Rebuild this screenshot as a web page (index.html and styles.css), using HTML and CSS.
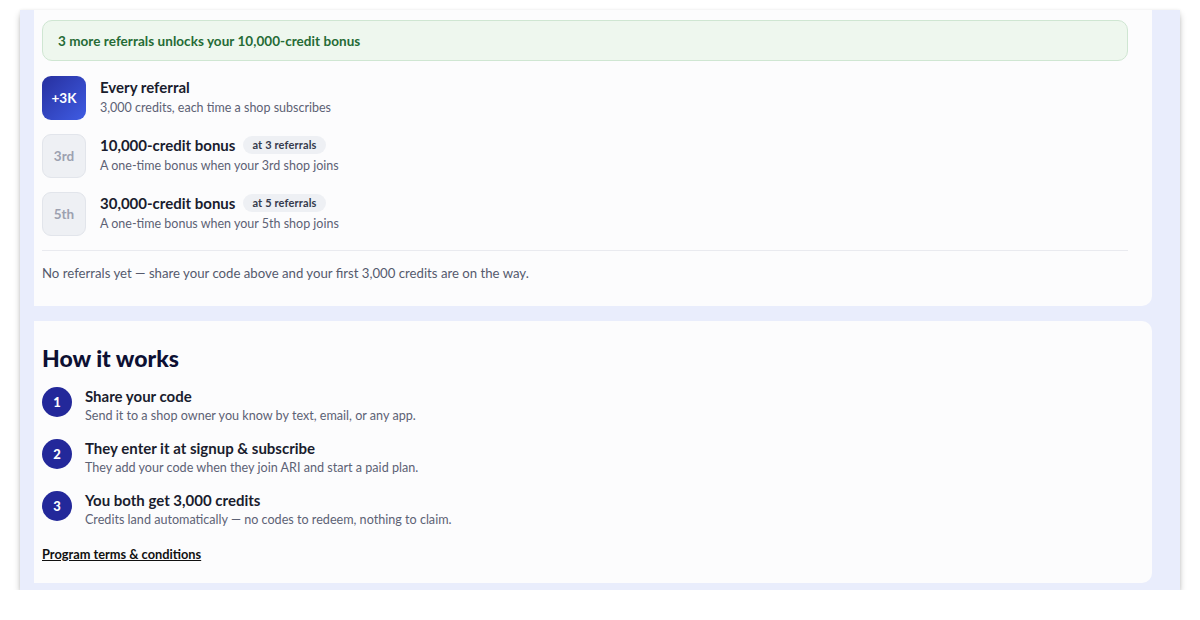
FILE: index.html
```html
<!DOCTYPE html>
<html lang="en">
<head>
    <meta charset="UTF-8">
    <meta name="viewport" content="width=device-width, initial-scale=1.0">
    <title>Referrals</title>
    <link rel="stylesheet" href="styles.css">
</head>
<body>
  <div class="frame">
    <div class="card rewards">
      <div class="banner">3 more referrals unlocks your 10,000-credit bonus</div>

      <div class="tiers">
        <div class="tier">
          <div class="badge active">+3K</div>
          <div class="tier-text">
            <div class="tier-title">Every referral</div>
            <div class="tier-sub">3,000 credits, each time a shop subscribes</div>
          </div>
        </div>
        <div class="tier">
          <div class="badge">3rd</div>
          <div class="tier-text">
            <div class="tier-title">10,000-credit bonus <span class="pill">at 3 referrals</span></div>
            <div class="tier-sub">A one-time bonus when your 3rd shop joins</div>
          </div>
        </div>
        <div class="tier">
          <div class="badge">5th</div>
          <div class="tier-text">
            <div class="tier-title">30,000-credit bonus <span class="pill">at 5 referrals</span></div>
            <div class="tier-sub">A one-time bonus when your 5th shop joins</div>
          </div>
        </div>
      </div>

      <div class="empty">No referrals yet — share your code above and your first 3,000 credits are on the way.</div>
    </div>

    <div class="card how">
      <h2>How it works</h2>
      <div class="steps">
        <div class="step">
          <div class="num">1</div>
          <div>
            <div class="step-title">Share your code</div>
            <div class="step-sub">Send it to a shop owner you know by text, email, or any app.</div>
          </div>
        </div>
        <div class="step">
          <div class="num">2</div>
          <div>
            <div class="step-title">They enter it at signup &amp; subscribe</div>
            <div class="step-sub">They add your code when they join ARI and start a paid plan.</div>
          </div>
        </div>
        <div class="step">
          <div class="num">3</div>
          <div>
            <div class="step-title">You both get 3,000 credits</div>
            <div class="step-sub">Credits land automatically — no codes to redeem, nothing to claim.</div>
          </div>
        </div>
      </div>
      <a class="terms" href="#">Program terms &amp; conditions</a>
    </div>
  </div>
</body>
</html>
```

FILE: styles.css
```css
body {
  margin: 0;
  padding: 0;
  background: #ffffff;
  font-family: 'Lato', 'Noto Sans', sans-serif;
  color: #1a1d2e;
}
.frame {
  margin: 10px 20px 0;
  height: 580px;
  box-sizing: border-box;
  padding: 0 28px 7px 14px;
  background: #e9edfc;
  box-shadow: 0 4px 7px -1px rgba(0, 0, 0, 0.32), 0 0 3px rgba(0, 0, 0, 0.06);
  overflow: hidden;
  display: flex;
  flex-direction: column;
  gap: 15px;
}
.card {
  background: #fcfcfd;
  box-sizing: border-box;
}
.rewards {
  height: 296px;
  padding: 10px 24px 0 8px;
  border-radius: 0 0 10px 0;
}
.banner {
  height: 41px;
  box-sizing: border-box;
  display: flex;
  align-items: center;
  padding-left: 15px;
  background: #eef7ee;
  border: 1px solid #cfe6d2;
  border-radius: 10px;
  color: #256b35;
  font-size: 13.5px;
  letter-spacing: 0.05px;
  font-weight: 700;
}
.tiers {
  display: flex;
  flex-direction: column;
  gap: 14px;
  margin-top: 15px;
}
.tier {
  display: flex;
  align-items: flex-start;
  gap: 14px;
}
.tier-text {
  padding-top: 1px;
}
.badge {
  width: 44px;
  height: 44px;
  box-sizing: border-box;
  border-radius: 9px;
  display: flex;
  align-items: center;
  justify-content: center;
  background: #eef0f4;
  border: 1px solid #e2e5eb;
  color: #9ca1b0;
  font-size: 13.5px;
  font-weight: 700;
  flex-shrink: 0;
}
.badge.active {
  background: linear-gradient(135deg, #27309f 0%, #3f5ce3 100%);
  border: none;
  color: #ffffff;
}
.tier-title {
  font-size: 15px;
  font-weight: 700;
  color: #1a1d2e;
  display: flex;
  align-items: center;
  gap: 8px;
  line-height: 20px;
}
.pill {
  background: #eef0f4;
  border-radius: 9px;
  padding: 2px 9px;
  font-size: 11px;
  letter-spacing: 0.15px;
  font-weight: 700;
  color: #353a4d;
  line-height: 14px;
}
.tier-sub {
  font-size: 12.5px;
  color: #5d6275;
  line-height: 20px;
  margin-top: 1px;
}
.empty {
  margin-top: 14px;
  border-top: 1px solid #e9eaef;
  padding-top: 12px;
  font-size: 13.2px;
  line-height: 20px;
  color: #555a6d;
}
.how {
  height: 262px;
  padding: 23px 24px 0 8px;
  border-radius: 0 10px 10px 0;
}
.how h2 {
  margin: 0;
  font-size: 23px;
  line-height: 28px;
  font-weight: 900;
  color: #0d1033;
}
.steps {
  display: flex;
  flex-direction: column;
  gap: 14px;
  margin-top: 15px;
}
.step {
  display: flex;
  align-items: flex-start;
  gap: 13px;
}
.num {
  width: 30px;
  height: 30px;
  border-radius: 50%;
  background: #23289a;
  color: #ffffff;
  font-size: 13px;
  font-weight: 900;
  display: flex;
  align-items: center;
  justify-content: center;
  flex-shrink: 0;
}
.step-title {
  font-size: 15px;
  font-weight: 700;
  line-height: 18px;
  color: #1a1d2e;
}
.step-sub {
  font-size: 12.6px;
  line-height: 18px;
  margin-top: 2px;
  color: #5d6275;
}
.terms {
  display: inline-block;
  margin-top: 17px;
  font-size: 12.8px;
  font-weight: 700;
  line-height: 16px;
  color: #111111;
  text-decoration: underline;
}
```
